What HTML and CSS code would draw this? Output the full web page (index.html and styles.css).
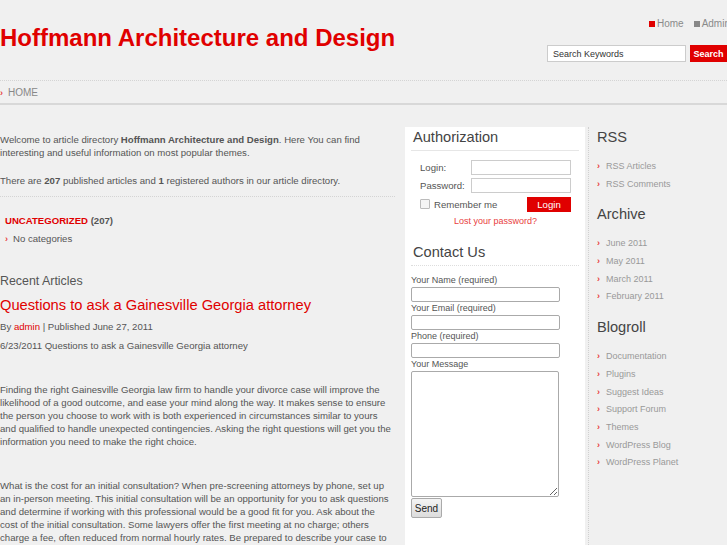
FILE: index.html
```html
<!DOCTYPE html>
<html>
<head>
<meta charset="utf-8">
<link rel="stylesheet" href="styles.css">
</head>
<body>
<div class="page">
  <header class="header">
    <h1 class="site-title">Hoffmann Architecture and Design</h1>
    <div class="header-right">
      <div class="top-links">
        <a class="top-link"><span class="sq red"></span>Home</a>
        <a class="top-link"><span class="sq grey"></span>Admin</a>
      </div>
      <form class="search">
        <input class="search-input" type="text" value="Search Keywords">
        <button class="search-btn" type="button">Search</button>
      </form>
    </div>
  </header>
  <nav class="nav"><span class="arrow">›</span>HOME</nav>
  <div class="content">
    <main class="main">
      <p class="intro">Welcome to article directory <b>Hoffmann Architecture and Design</b>. Here You can find interesting and useful information on most popular themes.</p>
      <p class="intro">There are <b>207</b> published articles and <b>1</b> registered authors in our article directory.</p>
      <div class="cats">
        <div class="cat-title"><a class="red-link">UNCATEGORIZED</a> (207)</div>
        <div class="cat-item"><span class="arrow">›</span>No categories</div>
      </div>
      <h3 class="recent">Recent Articles</h3>
      <h2 class="post-title">Questions to ask a Gainesville Georgia attorney</h2>
      <div class="meta">By <a class="red-link">admin</a> | Published June 27, 2011</div>
      <div class="excerpt">6/23/2011 Questions to ask a Gainesville Georgia attorney</div>
      <p class="body-text">Finding the right Gainesville Georgia law firm to handle your divorce case will improve the likelihood of a good outcome, and ease your mind along the way. It makes sense to ensure the person you choose to work with is both experienced in circumstances similar to yours and qualified to handle unexpected contingencies. Asking the right questions will get you the information you need to make the right choice.</p>
      <p class="body-text">What is the cost for an initial consultation? When pre-screening attorneys by phone, set up an in-person meeting. This initial consultation will be an opportunity for you to ask questions and determine if working with this professional would be a good fit for you. Ask about the cost of the initial consultation. Some lawyers offer the first meeting at no charge; others charge a fee, often reduced from normal hourly rates. Be prepared to describe your case to the attorney.</p>
    </main>
    <aside class="side1">
      <h3 class="w-title">Authorization</h3>
      <div class="login">
        <div class="login-row"><label class="login-label">Login:</label><input class="login-input" type="text"></div>
        <div class="login-row"><label class="login-label">Password:</label><input class="login-input" type="password"></div>
        <div class="login-row remember">
          <label class="remember-label"><span class="checkbox"></span>Remember me</label>
          <button class="login-btn" type="button">Login</button>
        </div>
        <a class="lost">Lost your password?</a>
      </div>
      <h3 class="w-title contact-title">Contact Us</h3>
      <form class="contact">
        <label class="c-label">Your Name (required)</label>
        <input class="c-input" type="text">
        <label class="c-label">Your Email (required)</label>
        <input class="c-input" type="text">
        <label class="c-label">Phone (required)</label>
        <input class="c-input" type="text">
        <label class="c-label">Your Message</label>
        <textarea class="c-area"></textarea>
        <button class="send" type="button">Send</button>
      </form>
    </aside>
    <aside class="side2">
      <h3 class="s-title">RSS</h3>
      <ul class="s-list">
        <li><span class="arrow">›</span>RSS Articles</li>
        <li><span class="arrow">›</span>RSS Comments</li>
      </ul>
      <h3 class="s-title">Archive</h3>
      <ul class="s-list">
        <li><span class="arrow">›</span>June 2011</li>
        <li><span class="arrow">›</span>May 2011</li>
        <li><span class="arrow">›</span>March 2011</li>
        <li><span class="arrow">›</span>February 2011</li>
      </ul>
      <h3 class="s-title">Blogroll</h3>
      <ul class="s-list">
        <li><span class="arrow">›</span>Documentation</li>
        <li><span class="arrow">›</span>Plugins</li>
        <li><span class="arrow">›</span>Suggest Ideas</li>
        <li><span class="arrow">›</span>Support Forum</li>
        <li><span class="arrow">›</span>Themes</li>
        <li><span class="arrow">›</span>WordPress Blog</li>
        <li><span class="arrow">›</span>WordPress Planet</li>
      </ul>
    </aside>
  </div>
</div>
</body>
</html>
```
FILE: styles.css
```css
html, body {
  margin: 0;
  padding: 0;
  overflow: hidden;
  background: #f0f0f0;
}
body {
  font-family: "Liberation Sans", Arial, sans-serif;
  font-size: 9.6px;
  color: #555;
}
.page {
  width: 727px;
}
a { cursor: pointer; }
.header {
  display: flex;
  justify-content: space-between;
  height: 80px;
  border-bottom: 1px dotted #d4d4d4;
}
.site-title {
  margin: 0;
  padding-top: 24px;
  font-size: 24px;
  line-height: 28px;
  font-weight: bold;
  color: #e00000;
  white-space: nowrap;
}
.header-right {
  display: flex;
  flex-direction: column;
  align-items: flex-end;
  padding-top: 18px;
}
.top-links {
  display: flex;
  gap: 10px;
  margin-right: -3px;
  height: 12px;
}
.top-link {
  color: #8a8a8a;
  font-size: 10px;
  line-height: 12px;
  display: flex;
  align-items: center;
}
.sq {
  display: inline-block;
  width: 6px;
  height: 6px;
  margin-right: 2px;
}
.sq.red { background: #e00000; }
.sq.grey { background: #888; }
.search {
  display: flex;
  gap: 4px;
  margin-top: 15px;
}
.search-input {
  width: 139px;
  height: 17px;
  box-sizing: border-box;
  padding: 1px 5px;
  border: 1px solid #ccc;
  font-family: inherit;
  font-size: 9px;
  color: #333;
  background: #fff;
  margin: 0;
}
.search-btn {
  width: 37px;
  height: 17px;
  margin: 0;
  border: 0;
  background: #e00000;
  color: #fff;
  font-family: inherit;
  font-weight: bold;
  font-size: 9px;
  padding: 0;
}
.nav {
  height: 22px;
  line-height: 23px;
  font-size: 10px;
  color: #888;
  border-bottom: 2px solid #d8d8d8;
}
.nav .arrow { margin-right: 5px; }
.arrow {
  color: #e84040;
  font-weight: bold;
  font-size: 9px;
}
.content {
  display: flex;
  align-items: flex-start;
  padding-top: 21px;
}
.main {
  width: 395px;
  flex-shrink: 0;
}
.intro {
  margin: 0 0 15px;
  line-height: 13px;
  padding-top: 7px;
}
.intro + .intro { padding-top: 0; margin-bottom: 9px; }
.cats {
  border-top: 1px dotted #d4d4d4;
  padding: 17px 0 0 5px;
}
.cat-title {
  font-weight: bold;
  line-height: 14px;
}
.red-link { color: #e00000; }
.cat-item {
  margin-top: 4px;
  line-height: 13px;
}
.cat-item .arrow { margin-right: 5px; }
.recent {
  margin: 27px 0 0;
  font-weight: normal;
  font-size: 12.4px;
  line-height: 16px;
  color: #555;
}
.post-title {
  margin: 6px 0 0;
  font-weight: normal;
  font-size: 14.7px;
  line-height: 20px;
  color: #e00000;
}
.meta {
  margin-top: 5px;
  line-height: 13px;
}
.excerpt {
  margin-top: 6px;
  line-height: 13px;
}
.body-text {
  margin: 31px 0 0;
  line-height: 13px;
}
.side1 {
  width: 180px;
  flex-shrink: 0;
  margin-left: 10px;
  background: #fff;
  padding: 0 6px 60px;
  box-sizing: border-box;
  height: 430px;
  margin-top: 1px;
}
.w-title {
  margin: 0;
  padding: 1px 0 0 2px;
  font-weight: normal;
  font-size: 14.6px;
  line-height: 18px;
  color: #444;
  border-bottom: 1px solid #e6e6e6;
  height: 24px;
  box-sizing: border-box;
}
.login {
  padding: 7px 8px 0 9px;
  display: flex;
  flex-direction: column;
}
.login-row {
  display: flex;
  justify-content: space-between;
  align-items: center;
  height: 18px;
}
.login-input {
  width: 100px;
  height: 15px;
  box-sizing: border-box;
  border: 1px solid #ccc;
  margin: 0;
}
.remember { margin-top: 1px; }
.remember-label {
  display: flex;
  align-items: center;
}
.checkbox {
  width: 10px;
  height: 10px;
  box-sizing: border-box;
  border: 1px solid #bbb;
  border-radius: 1px;
  background: #f4f4f4;
  margin-right: 4px;
}
.login-btn {
  width: 44px;
  height: 15px;
  border: 0;
  margin: 0;
  padding: 0;
  background: #e00000;
  color: #fff;
  font-family: inherit;
  font-size: 9.6px;
}
.lost {
  align-self: center;
  color: #e84040;
  margin-top: 2px;
  font-size: 9px;
  line-height: 12px;
}
.contact-title {
  margin-top: 15px;
  border-bottom: 1px dotted #ddd;
}
.contact {
  display: flex;
  flex-direction: column;
  align-items: flex-start;
  padding-top: 8px;
}
.c-label {
  font-size: 9px;
  line-height: 12px;
  height: 12px;
  margin-bottom: 1px;
}
.c-input {
  width: 149px;
  height: 15px;
  box-sizing: border-box;
  border: 1px solid #aaa;
  border-radius: 2px;
  margin: 0;
}
.c-area {
  width: 148px;
  height: 126px;
  box-sizing: border-box;
  border: 1px solid #aaa;
  border-radius: 2px;
  margin: 0;
}
.send {
  height: 20px;
  width: 31px;
  padding: 0;
  margin-top: 1px;
  font-family: inherit;
  font-size: 10px;
  color: #222;
  border: 1px solid #aaa;
  border-radius: 2px;
  background: linear-gradient(#f4f4f4, #dcdcdc);
}
.side2 {
  flex-shrink: 0;
  margin-left: 3px;
  border-left: 1px dotted #d0d0d0;
  padding-left: 8px;
  width: 140px;
  height: 430px;
  margin-top: 1px;
}
.s-title {
  margin: 0;
  font-weight: normal;
  font-size: 14.6px;
  line-height: 18px;
  color: #444;
  padding-top: 1px;
}
.s-list {
  list-style: none;
  margin: 12px 0 11px;
  padding: 0;
}
.s-list li {
  height: 17.7px;
  line-height: 17.7px;
  font-size: 9px;
  color: #999;
}
.s-list .arrow { margin-right: 6px; }
```
